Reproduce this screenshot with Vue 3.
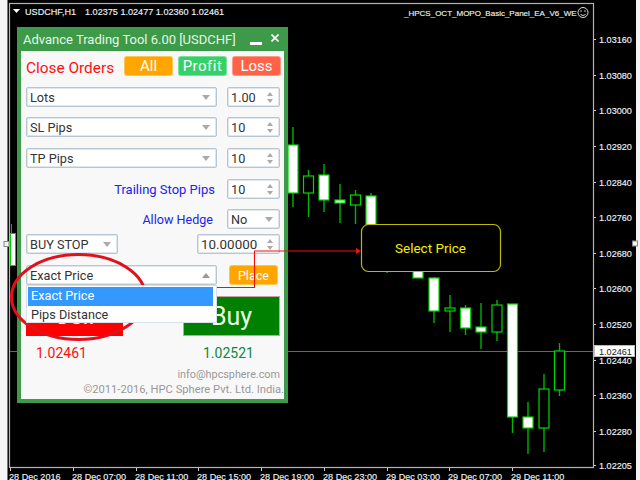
<script setup>
const candles = [
  { x: 293, t: 145, b: 193, wt: 127, wb: 207, f: true },
  { x: 308.5, t: 176, b: 193, wt: 170, wb: 217, f: false },
  { x: 324, t: 175, b: 200, wt: 164, wb: 212, f: true },
  { x: 340, t: 200, b: 203, wt: 184, wb: 223, f: true },
  { x: 355.5, t: 195, b: 205, wt: 190, wb: 224, f: false },
  { x: 371, t: 196, b: 240, wt: 193, wb: 245, f: true },
  { x: 387, t: 240, b: 250, wt: 235, wb: 273, f: false },
  { x: 418, t: 250, b: 278, wt: 245, wb: 278, f: true },
  { x: 434, t: 278, b: 311, wt: 277, wb: 323, f: true },
  { x: 450, t: 308, b: 311, wt: 295, wb: 332, f: false },
  { x: 465.5, t: 308, b: 328, wt: 305, wb: 335, f: true },
  { x: 481, t: 327, b: 332, wt: 303, wb: 349, f: true },
  { x: 497, t: 305, b: 332, wt: 300, wb: 341, f: false },
  { x: 512.5, t: 304, b: 417, wt: 304, wb: 433, f: true },
  { x: 528, t: 417, b: 428, wt: 402, wb: 454, f: true },
  { x: 544, t: 389, b: 428, wt: 374, wb: 452, f: false },
  { x: 559.5, t: 351, b: 390, wt: 343, wb: 396, f: false }
]
const prices = [
  ['1.03160', 39], ['1.03080', 75], ['1.03000', 110], ['1.02920', 146],
  ['1.02840', 182], ['1.02760', 217], ['1.02680', 253], ['1.02600', 288],
  ['1.02520', 324], ['1.02440', 360], ['1.02360', 395], ['1.02280', 431], ['1.02205', 465]
]
const times = [
  ['28 Dec 2016', 10], ['28 Dec 07:00', 73], ['28 Dec 11:00', 136], ['28 Dec 15:00', 198],
  ['28 Dec 19:00', 261], ['28 Dec 23:00', 324], ['29 Dec 03:00', 387], ['29 Dec 07:00', 449], ['29 Dec 11:00', 512]
]
const closeButtons = [
  { label: 'All', cls: 'orange' },
  { label: 'Profit', cls: 'lime' },
  { label: 'Loss', cls: 'tomato' }
]
const inputs = [
  { label: 'Lots', value: '1.00', cls: '' },
  { label: 'SL Pips', value: '10', cls: 'snug' },
  { label: 'TP Pips', value: '10', cls: '' }
]
</script>

<template>
  <div class="screen">
    <svg class="chart" width="640" height="480" viewBox="0 0 640 480">
      <rect x="0" y="0" width="7" height="480" fill="#f6f6f6" />
      <rect x="7" y="0" width="1" height="480" fill="#777" />
      <rect x="636" y="0" width="4" height="480" fill="#f4f4f4" />
      <rect x="9.5" y="3.5" width="584" height="464" fill="none" stroke="#b4b4b4" stroke-width="1.2" />
      <line x1="10" y1="351.5" x2="593" y2="351.5" stroke="#5a6a78" />

      <rect x="10.5" y="233.5" width="5" height="32" fill="#fff" stroke="#00d000" />
      <line x1="11.5" y1="224" x2="11.5" y2="233" stroke="#00c000" />

      <g v-for="c in candles" :key="c.x">
        <line :x1="c.x" :x2="c.x" :y1="c.wt" :y2="c.wb" stroke="#00b400" stroke-width="1.4" />
        <rect :x="c.x - 5" :y="c.t" width="10" :height="c.b - c.t" :fill="c.f ? '#fff' : '#000'" stroke="#00d800" stroke-width="1.2" />
      </g>

      <g class="axis">
        <g v-for="p in prices" :key="p[0]">
          <rect x="594" :y="p[1]" width="2" height="1" fill="#ccc" />
          <text x="599" :y="p[1] + 4">{{ p[0] }}</text>
        </g>
        <g v-for="t in times" :key="t[0]">
          <rect :x="t[1]" y="468" width="1" height="3" fill="#ccc" />
          <text :x="t[1] - 1" y="480">{{ t[0] }}</text>
        </g>
        <text x="25" y="15">USDCHF,H1</text>
        <text x="85" y="15">1.02375 1.02477 1.02360 1.02461</text>
        <text x="404" y="15.5" class="ea">_HPCS_OCT_MOPO_Basic_Panel_EA_V6_WE</text>
      </g>
      <polygon points="13,9 20,9 16.5,13" fill="#fff" />
      <g fill="none" stroke="#ddd">
        <circle cx="583" cy="12.5" r="5" />
        <path d="M580.5 14.5q2.5 2 5 0" />
      </g>
      <circle cx="581" cy="11" r="0.8" fill="#ddd" />
      <circle cx="585" cy="11" r="0.8" fill="#ddd" />

      <rect x="594.5" y="345.5" width="40" height="11" fill="#fff" stroke="#bbb" />
      <text x="599" y="355" class="tag">1.02461</text>
      <rect x="632.5" y="241" width="5" height="5" fill="#f4f4f4" stroke="#888" />
      <rect x="4" y="241.5" width="5" height="5" fill="#f4f4f4" stroke="#888" />

      <rect x="361.5" y="224.5" width="139" height="47" rx="7" fill="#000" stroke="#bdb800" stroke-width="1.2" />
      <text x="430.5" y="253" class="callout">Select Price</text>
    </svg>

    <section class="panel">
      <header class="title">
        <span class="title-text">Advance Trading Tool 6.00 [USDCHF]</span>
        <span class="min"></span>
        <svg class="close" width="8" height="8" viewBox="0 0 8 8">
          <path d="M.5 .5L7.5 7.5M7.5 .5L.5 7.5" stroke="#fff" stroke-width="1.6" />
        </svg>
      </header>
      <div class="body">
        <div class="row close-row">
          <span class="close-label">Close Orders</span>
          <div class="close-buttons">
            <button v-for="b in closeButtons" :key="b.label" class="action" :class="b.cls">{{ b.label }}</button>
          </div>
        </div>

        <div v-for="i in inputs" :key="i.label" class="row spaced" :class="i.cls">
          <div class="field wide"><span>{{ i.label }}</span><i class="caret"></i></div>
          <div class="field spin"><span>{{ i.value }}</span><i class="arrows"><b class="up"></b><b class="down"></b></i></div>
        </div>

        <div class="row spaced label-row">
          <span class="blue">Trailing Stop Pips</span>
          <div class="field spin"><span>10</span><i class="arrows"><b class="up"></b><b class="down"></b></i></div>
        </div>

        <div class="row spaced label-row snug">
          <span class="blue hedge">Allow Hedge</span>
          <div class="field spin"><span>No</span><i class="caret"></i></div>
        </div>

        <div class="row spaced close-gap">
          <div class="field short"><span>BUY STOP</span><i class="caret"></i></div>
          <div class="field number"><span>10.00000</span><i class="arrows"><b class="up"></b><b class="down"></b></i></div>
        </div>

        <div class="row spaced">
          <div class="field wide">
            <span>Exact Price</span><i class="caret flip"></i>
            <ul class="menu">
              <li class="active">Exact Price</li>
              <li>Pips Distance</li>
            </ul>
          </div>
          <button class="action orange place">Place</button>
        </div>

        <div class="row spaced trade">
          <button class="big sell">Sell</button>
          <button class="big buy">Buy</button>
        </div>

        <div class="quotes">
          <span class="bid">1.02461</span>
          <span class="ask">1.02521</span>
        </div>

        <footer class="foot">
          <span class="info">info@hpcsphere.com</span>
          <span class="copy">©2011-2016, HPC Sphere Pvt. Ltd. India.</span>
        </footer>
      </div>
    </section>

    <svg class="overlay" width="640" height="480" viewBox="0 0 640 480">
      <path d="M148 287.5H254.5V251H358" fill="none" stroke="#f01010" stroke-width="1.1" />
      <polygon points="356,248 361,251 356,254" fill="#f01010" />
      <ellipse cx="78.5" cy="297" rx="67" ry="42.5" fill="none" stroke="#e0101c" stroke-width="3" />
    </svg>
  </div>
</template>

<style>
html, body { margin: 0; background: #000; }
</style>

<style scoped>
.screen {
  position: relative;
  width: 640px;
  height: 480px;
  overflow: hidden;
  background: #000;
  font-family: Roboto, "Noto Sans", sans-serif;
}
.chart, .overlay { position: absolute; left: 0; top: 0; }
.overlay { pointer-events: none; }
.axis text {
  font-family: "Liberation Sans", sans-serif;
  font-size: 9.1px;
  fill: #f2f7fc;
  stroke: #dfeaf4;
  stroke-width: .15px;
}
.axis .ea { font-size: 8px; }
.tag { font-family: "Liberation Sans", sans-serif; font-size: 9.1px; fill: #222; }
.callout {
  font-family: Roboto, sans-serif;
  font-size: 13.5px;
  fill: #f4f000;
  text-anchor: middle;
}

.panel {
  position: absolute;
  left: 17px;
  top: 27px;
  width: 271px;
  height: 376px;
  box-sizing: border-box;
  border: 4px solid #3c9a48;
  border-top: 0;
  background: #f8f8f8;
  display: flex;
  flex-direction: column;
}
.title {
  margin: 0 -4px;
  height: 24px;
  flex: none;
  background: #3c9a48;
  color: #e8f6e8;
  display: flex;
  align-items: center;
  padding: 1px 9px 0 6px;
  box-sizing: border-box;
  font-size: 13px;
}
.title-text { flex: 1; white-space: nowrap; }
.min { width: 12px; height: 3px; background: #fff; margin: 8px 9px 0 0; }
.close { margin-bottom: 3px; }

.body {
  flex: 1;
  padding: 5px 4px 0 5px;
  display: flex;
  flex-direction: column;
  min-height: 0;
}
.row { display: flex; height: 20px; flex: none; margin-top: 11px; }
.row:first-child { margin-top: 0; }
.row.snug { margin-top: 10px; }
.row.close-gap { margin-top: 5px; }
.spaced { justify-content: space-between; }
.close-row { align-items: center; justify-content: space-between; }
.close-label { color: #ff1010; font-size: 15.4px; white-space: nowrap; padding-top: 4px; }
.close-buttons { display: flex; gap: 5px; margin-right: -1px; }
.action {
  width: 49px;
  height: 20px;
  padding: 1px 0 0;
  border: 1px solid rgba(255,255,255,.35);
  border-radius: 3px;
  color: #fff;
  font: 15px Roboto, sans-serif;
  line-height: 17px;
}
.orange { background: #ffa500; }
.lime { background: #34d068; letter-spacing: .5px; }
.tomato { background: #ff6347; }

.field {
  position: relative;
  box-sizing: border-box;
  height: 20px;
  background: #fff;
  border: 1px solid #b8c6d2;
  box-shadow: inset 0 0 0 1px #dfe6ec;
  border-radius: 2px;
  display: flex;
  align-items: center;
  justify-content: space-between;
  padding: 0 6px 0 3px;
  color: #333;
  font-size: 12.7px;
  white-space: nowrap;
}
.wide { width: 191px; }
.spin { width: 53px; }
.short { width: 92px; }
.number { width: 83px; font-size: 13.4px; }
.caret {
  width: 0;
  height: 0;
  border: 4px solid transparent;
  border-top: 5px solid #aaa;
  border-bottom: 0;
}
.caret.flip { border-top: 0; border-bottom: 5px solid #999; }
.arrows { display: flex; flex-direction: column; gap: 3px; }
.arrows b { display: block; width: 0; height: 0; border: 3.5px solid transparent; }
.arrows .up { border-top: 0; border-bottom: 4px solid #aaa; }
.arrows .down { border-bottom: 0; border-top: 4px solid #aaa; }

.label-row { justify-content: flex-end; align-items: center; gap: 12px; }
.blue { color: #2222ee; font-size: 13px; white-space: nowrap; }
.hedge { margin-right: 2px; font-size: 12.6px; }

.place { width: 49px; margin-right: 2px; font-size: 12.6px; }

.menu {
  position: absolute;
  z-index: 2;
  left: -1px;
  top: 19px;
  width: 191px;
  height: 38px;
  box-sizing: border-box;
  margin: 0;
  padding: 1px 3px 0 1px;
  list-style: none;
  background: #fff;
  border: 1px solid #d8e0e8;
  color: #333;
  font-size: 12.7px;
}
.menu li { height: 18px; line-height: 18px; padding-left: 3px; }
.menu .active { height: 19px; background: #3399ff; color: #fff; }

.big {
  width: 97px;
  height: 40px;
  padding: 0;
  color: #fff;
  font: 25px Roboto, sans-serif;
  border: 1px solid #c9a0a0;
  box-sizing: border-box;
}
.row.trade { height: 40px; }
.sell { background: #ff0000; border-color: #ff0000; padding-bottom: 2px; }
.buy { background: #008000; color: #f0ffe0; }

.quotes { display: flex; margin-top: 7px; font-size: 14px; line-height: 20px; }
.bid { color: #ff1010; margin-left: 10px; width: 167px; }
.ask { color: #0a8a3a; }

.foot {
  margin-top: 4px;
  display: flex;
  flex-direction: column;
  align-items: flex-end;
  color: #999;
  font-size: 11.2px;
  line-height: 15px;
  white-space: nowrap;
}
.info { font-size: 10.8px; }
.copy { margin-right: -4px; }
</style>
